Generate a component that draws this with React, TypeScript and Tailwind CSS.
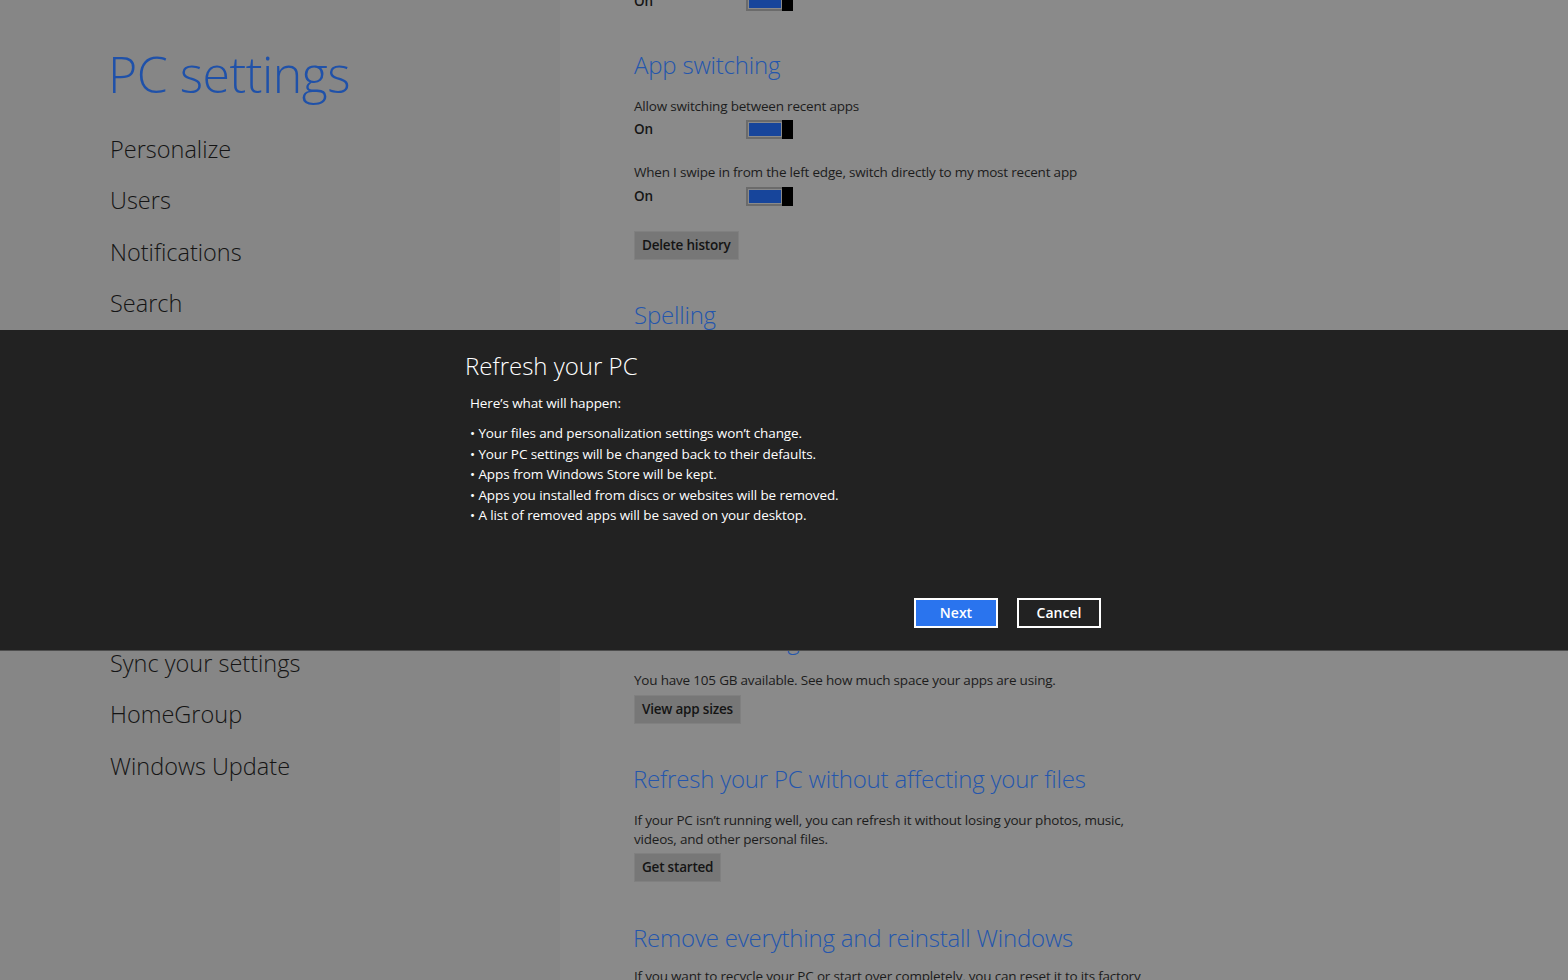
import React from 'react';

const navItems = [
  'Personalize',
  'Users',
  'Notifications',
  'Search',
  'Share',
  'General',
  'Privacy',
  'Devices',
  'Wireless',
  'Ease of Access',
  'Sync your settings',
  'HomeGroup',
  'Windows Update',
];

const bullets = [
  'Your files and personalization settings won’t change.',
  'Your PC settings will be changed back to their defaults.',
  'Apps from Windows Store will be kept.',
  'Apps you installed from discs or websites will be removed.',
  'A list of removed apps will be saved on your desktop.',
];

function Toggle() {
  return (
    <div className="flex h-[19px] w-[47px]">
      <div className="flex-1 border-2 border-r-0 border-[#6b6b6b] p-[1px]">
        <div className="h-full w-full bg-[#17459b]" />
      </div>
      <div className="w-[11px] bg-black" />
    </div>
  );
}

function OnRow({ className = '' }: { className?: string }) {
  return (
    <div className={`flex h-[19px] items-center ${className}`}>
      <span className="w-[112px] text-[13.5px] font-semibold tracking-[-0.2px] text-[#151515]">On</span>
      <Toggle />
    </div>
  );
}

function Heading({ children, className = '' }: { children: React.ReactNode; className?: string }) {
  return (
    <h2 className={`text-[24px] leading-[34px] font-light tracking-[-0.2px] text-[#2456ad] ${className}`}>{children}</h2>
  );
}

function Desc({ children, className = '' }: { children: React.ReactNode; className?: string }) {
  return (
    <p className={`text-[13.5px] leading-[19px] tracking-[-0.2px] text-[#1c1c1c] ${className}`}>{children}</p>
  );
}

function GrayButton({ children, className = '' }: { children: React.ReactNode; className?: string }) {
  return (
    <button
      className={`block h-[29px] border border-[#808080] bg-[#777777] px-[7px] text-[13.5px] font-semibold tracking-[-0.2px] text-[#141414] ${className}`}
    >
      {children}
    </button>
  );
}

export default function App() {
  return (
    <div className="relative flex h-[980px] w-[1568px] overflow-hidden font-['Open_Sans','Noto_Sans',sans-serif]">
      {/* left nav */}
      <aside className="w-[560px] shrink-0 bg-[#868686] pl-[108px]">
        <h1 className="mt-[42px] text-[50px] leading-[64px] font-light tracking-[-0.5px] text-[#1f51a9]">PC settings</h1>
        <nav className="mt-[18px] flex flex-col pl-[2px]">
          {navItems.map((item) => (
            <div key={item} className="text-[23.5px] leading-[51.4px] font-light text-[#141414]">
              {item}
            </div>
          ))}
        </nav>
      </aside>

      {/* settings content */}
      <main className="flex-1 bg-[#8a8a8a] pl-[74px]">
        <OnRow className="-mt-[8px]" />
        <Heading className="mt-[37px]">App switching</Heading>
        <Desc className="mt-[15px]">Allow switching between recent apps</Desc>
        <OnRow className="mt-[4px]" />
        <Desc className="mt-[24px]">When I swipe in from the left edge, switch directly to my most recent app</Desc>
        <OnRow className="mt-[5px]" />
        <GrayButton className="mt-[25px]">Delete history</GrayButton>
        <Heading className="mt-[38px]">Spelling</Heading>
        <div className="h-[291px] overflow-hidden">
          <Desc className="mt-[15px]">Autocorrect misspelled words</Desc>
          <OnRow className="mt-[4px]" />
          <Desc className="mt-[24px]">Highlight misspelled words</Desc>
          <OnRow className="mt-[5px]" />
          <Heading className="mt-[38px]">Language</Heading>
          <Desc className="mt-[15px]">Language preferences</Desc>
        </div>
        <Heading>Available storage</Heading>
        <Desc className="mt-[14px]">You have 105 GB available. See how much space your apps are using.</Desc>
        <GrayButton className="mt-[5px]">View app sizes</GrayButton>
        <Heading className="mt-[38px] -ml-[1px]">Refresh your PC without affecting your files</Heading>
        <Desc className="mt-[15px] w-[492px]">
          If your PC isn’t running well, you can refresh it without losing your photos, music, videos, and other personal files.
        </Desc>
        <GrayButton className="mt-[4px]">Get started</GrayButton>
        <Heading className="mt-[39px] -ml-[1px]">Remove everything and reinstall Windows</Heading>
        <Desc className="mt-[12px] w-[512px]">
          If you want to recycle your PC or start over completely, you can reset it to its factory settings.
        </Desc>
      </main>

      {/* refresh dialog */}
      <div className="absolute left-0 top-[330px] h-[321px] w-full border-b border-[#4d4d4d] bg-[#222222]">
        <div className="ml-[465px] w-[636px]">
          <h3 className="mt-[20px] text-[24px] leading-[32px] font-light text-white">Refresh your PC</h3>
          <p className="ml-[5px] mt-[11px] text-[13.5px] leading-[20px] tracking-[-0.1px] text-white">
            Here’s what will happen:
          </p>
          <ul className="ml-[5px] mt-[10px] text-[13.5px] leading-[20.6px] tracking-[-0.1px] text-white">
            {bullets.map((b) => (
              <li key={b}>• {b}</li>
            ))}
          </ul>
          <div className="mt-[72px] flex justify-end gap-[19px]">
            <button className="h-[30px] w-[84px] border-2 border-white bg-[#2a74ee] text-[14px] font-semibold text-white">
              Next
            </button>
            <button className="h-[30px] w-[84px] border-2 border-white bg-transparent text-[14px] font-semibold text-white">
              Cancel
            </button>
          </div>
        </div>
      </div>
    </div>
  );
}
